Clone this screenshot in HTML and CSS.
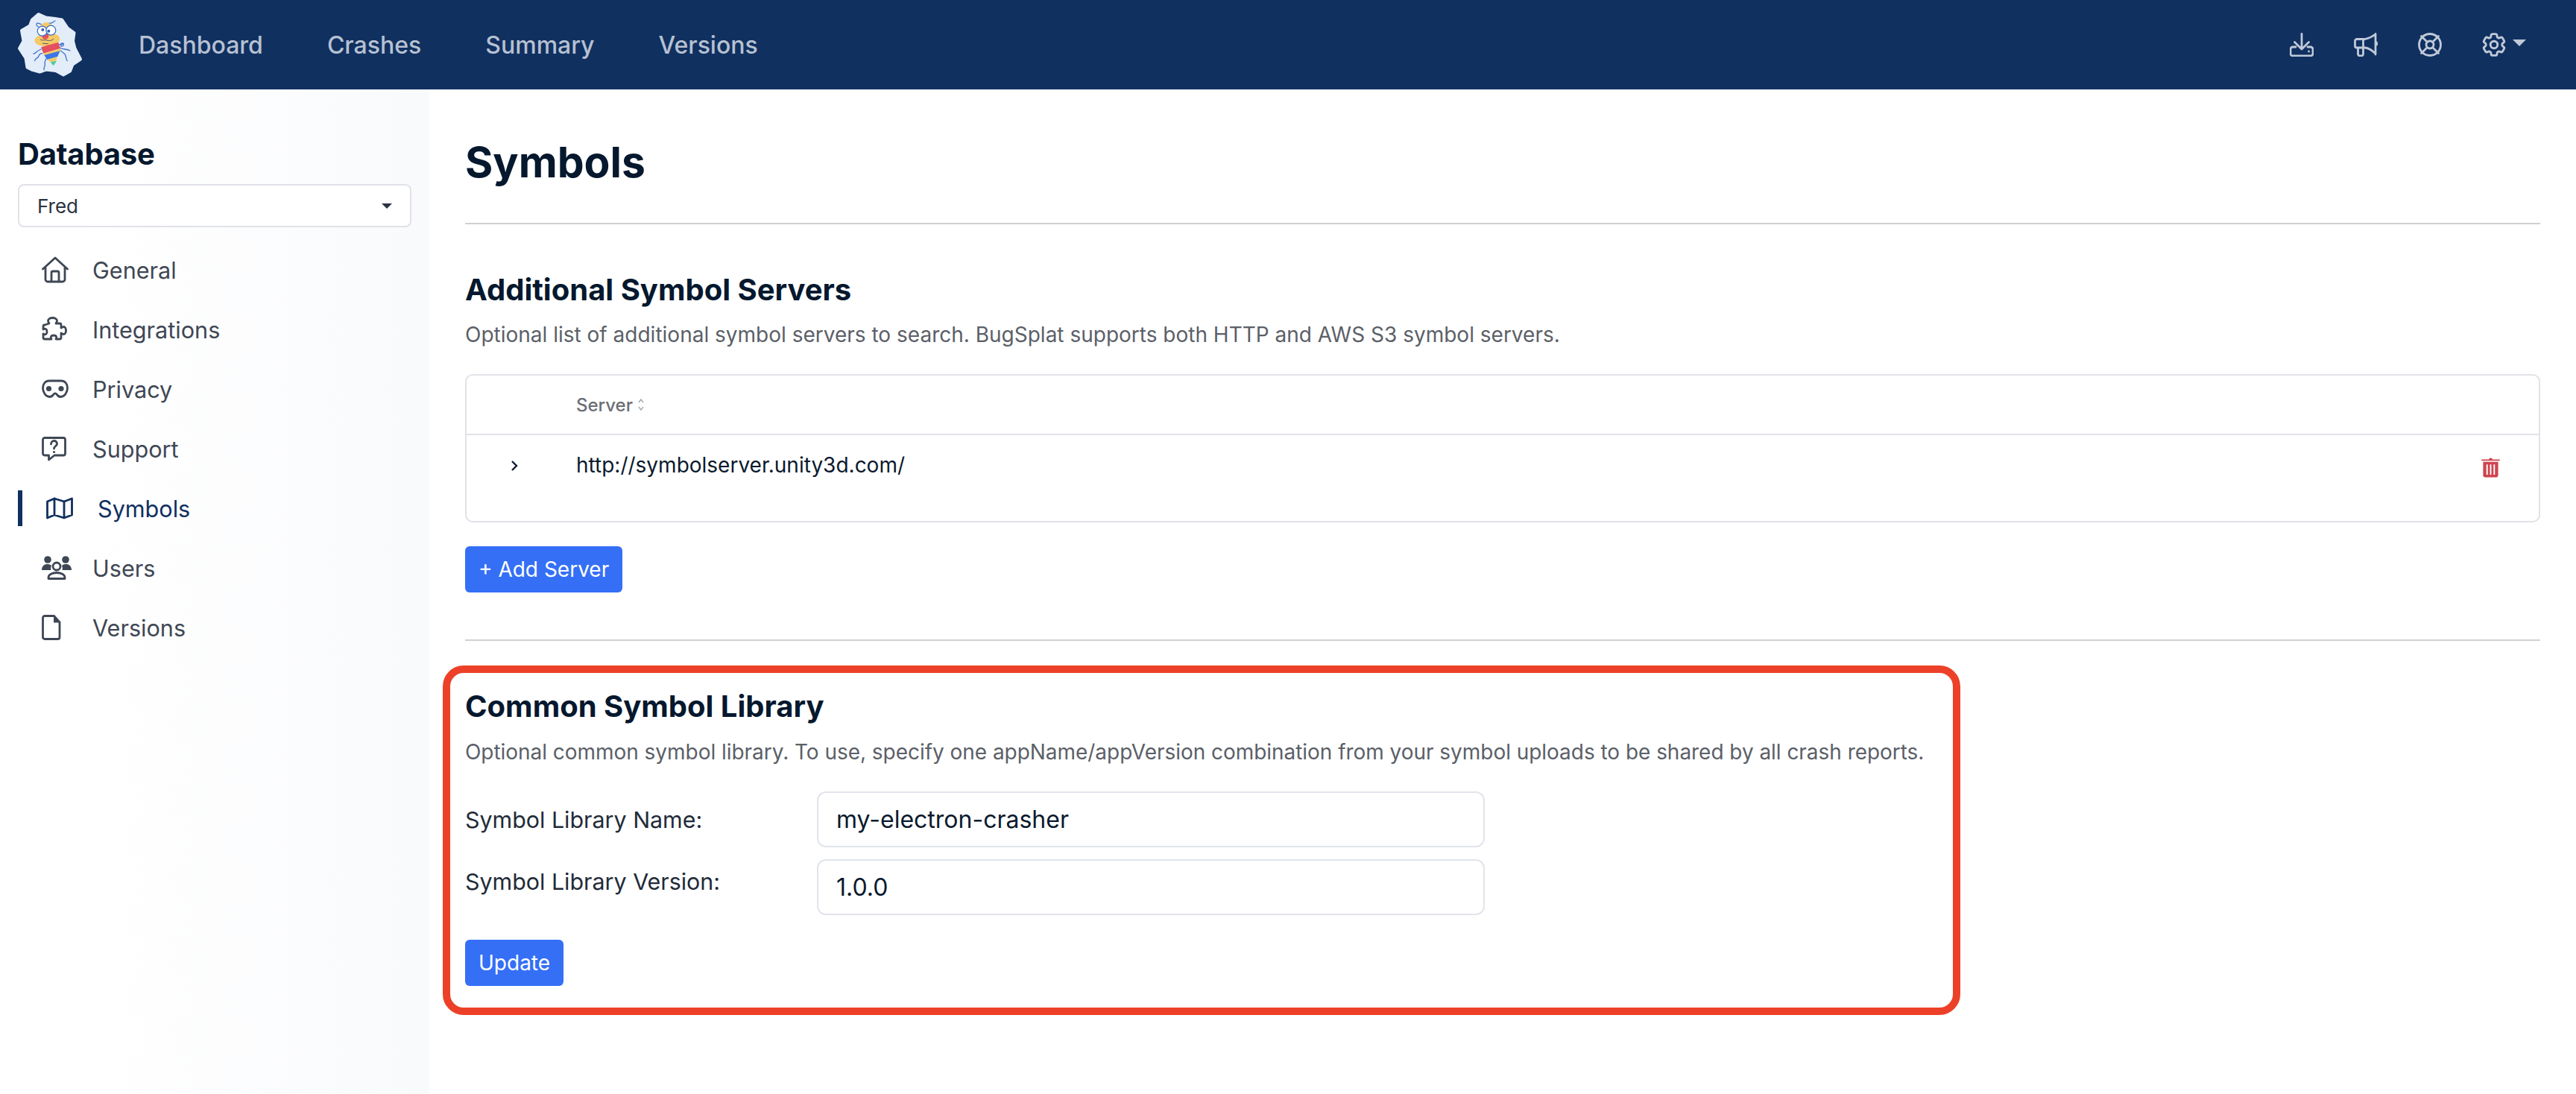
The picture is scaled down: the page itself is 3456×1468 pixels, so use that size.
FILE: index.html
```html
<!DOCTYPE html>
<html lang="en">
<head>
<meta charset="utf-8">
<title>Symbols</title>
<link rel="stylesheet" href="styles.css">
</head>
<body>
<header class="topbar">
  <a class="logo" href="#">
    <svg width="90" height="90" viewBox="0 0 90 90">
      <polygon class="blob" points="30.700,4 40.700,8.500 53,10 62,11.500 69.500,22.500 78.500,29 77,40 79.500,50 87,64.500 76.500,71.500 73,80.500 64,85.500 54,80 40.700,78.500 32.300,81.500 21.500,78.500 15.500,75.500 13.500,63 5,50 10.500,40 8,26 19,19.500 22,11.500"/>
      <g fill="none" stroke="#3a70c9" stroke-width="1.300" stroke-linecap="round">
        <path d="M37 20c-3-3-9-6-9-2 0 3 4 4 6 3"/>
        <path d="M42 17c3-2 4 0 6-1s3-2 5-3"/>
        <path d="M24 57c3 0 3-3 10-6"/>
        <path d="M25.700 66.700c0-4 4-3 5-6s2-4 5-4"/>
        <path d="M38.300 79c-2-3 2-5 1-8s1-5 1.500-7"/>
        <path d="M58 45c3-1 3-2 5-2 2 0 2 4-1 4s-1-3 1-3"/>
        <path d="M59 49c4 3 9 1 14 4"/>
        <path d="M60.700 53c2 3 5 3 6 6s1 6 2.500 7.500"/>
      </g>
      <ellipse cx="41" cy="24" rx="9" ry="9" fill="#f5c964"/>
      <ellipse cx="42.300" cy="38.300" rx="17" ry="8.500" transform="rotate(-6 42.300 38.300)" fill="#f5c964"/>
      <polygon points="34,48.300 57.300,41.700 60,50 37.300,56.700" fill="#e5505f"/>
      <polygon points="37.300,56.700 60,50 60,55 38.300,59.500" fill="#f5c964"/>
      <polygon points="38.300,59 59.500,53.300 56.300,61 42.300,65" fill="#3b77e6"/>
      <polygon points="42.300,65 56.300,61 54,66.700 46.700,68.300" fill="#f5c964"/>
      <polygon points="46.700,68.300 55,66.700 50.700,73.300" fill="#4ac99a"/>
      <path d="M33 38c3 2 6 0 9 1s6 1 9-2M36 43c3 1 5 0 8 1" fill="none" stroke="#4a5a75" stroke-width="1"/>
      <circle cx="39.700" cy="33.300" r="4.500" fill="#e5505f"/>
      <circle cx="35.700" cy="26.700" r="6.500" fill="#fff" stroke="#3a70c9" stroke-width="1.300"/>
      <circle cx="47.300" cy="25.700" r="6.500" fill="#fff" stroke="#3a70c9" stroke-width="1.300"/>
      <circle cx="36.300" cy="25" r="2" fill="#2f62b8"/>
      <circle cx="44.300" cy="26.700" r="2" fill="#2f62b8"/>
    </svg>
  </a>
  <nav class="topnav">
    <a href="#">Dashboard</a>
    <a href="#">Crashes</a>
    <a href="#">Summary</a>
    <a href="#">Versions</a>
  </nav>
  <div class="topicons">
    <svg class="ti" viewBox="0 0 32 32"><path d="M16 1.500V22M6.500 12.500 16 22l9.500-9.500M8 19H4a3 3 0 0 0-3 3v6a3 3 0 0 0 3 3h24a3 3 0 0 0 3-3v-6a3 3 0 0 0-3-3h-4"/><circle class="dot" cx="25.500" cy="25" r="1.400"/></svg>
    <svg class="ti" viewBox="0 0 32 32"><path d="M29 1.500v27.500M29 2c-4 3-9 5.500-14 6.500H4A2.500 2.500 0 0 0 1.500 11v6.500A2.500 2.500 0 0 0 4 20h11c5 .5 10 4 14 8M12.500 8.500v20A2.500 2.500 0 0 1 10 31H8a2.500 2.500 0 0 1-2.500-2.500V20M29.500 12.500c2 .5 2 3.500 0 4"/></svg>
    <svg class="ti" viewBox="0 0 32 32"><circle cx="16" cy="16" r="14.500"/><circle cx="16" cy="16" r="5"/><path d="m4.500 4.500 8 8M27.500 4.500l-8 8M4.500 27.500l8-8M27.500 27.500l-8-8"/></svg>
    <span class="gear">
      <svg class="ti cog" viewBox="2 2 20 20"><path d="M9.594 3.94c.09-.542.56-.94 1.11-.94h2.593c.55 0 1.02.398 1.11.94l.213 1.281c.063.374.313.686.645.87.074.04.147.083.22.127.325.196.72.257 1.075.124l1.217-.456a1.125 1.125 0 0 1 1.37.49l1.296 2.247a1.125 1.125 0 0 1-.26 1.431l-1.003.827c-.293.241-.438.613-.43.992a7.723 7.723 0 0 1 0 .255c-.008.378.137.75.43.991l1.004.827c.424.35.534.955.26 1.43l-1.298 2.247a1.125 1.125 0 0 1-1.369.491l-1.217-.456c-.355-.133-.75-.072-1.076.124a6.47 6.47 0 0 1-.22.128c-.331.183-.581.495-.644.869l-.213 1.281c-.09.543-.56.94-1.11.94h-2.594c-.55 0-1.019-.398-1.11-.94l-.213-1.281c-.062-.374-.312-.686-.644-.87a6.52 6.52 0 0 1-.22-.127c-.325-.196-.72-.257-1.076-.124l-1.217.456a1.125 1.125 0 0 1-1.369-.49l-1.297-2.247a1.125 1.125 0 0 1 .26-1.431l1.004-.827c.292-.24.437-.613.43-.991a6.932 6.932 0 0 1 0-.255c.007-.38-.138-.751-.43-.992l-1.004-.827a1.125 1.125 0 0 1-.26-1.43l1.297-2.247a1.125 1.125 0 0 1 1.37-.491l1.216.456c.356.133.751.072 1.076-.124.072-.044.146-.086.22-.128.332-.183.582-.495.644-.869l.214-1.28Z"/><path d="M15 12a3 3 0 1 1-6 0 3 3 0 0 1 6 0Z"/></svg>
      <i class="caret-light"></i>
    </span>
  </div>
</header>
<div class="layout">
  <aside class="sidebar">
    <h2 class="side-title">Database</h2>
    <div class="db-select"><span>Fred</span><i class="caret-dark"></i></div>
    <ul class="side-nav">
      <li><svg class="si" viewBox="0 0 36 36"><path d="M1.500 17 18 2l16.500 15M5 14v17a3 3 0 0 0 3 3h20a3 3 0 0 0 3-3V14M13 34V22a2 2 0 0 1 2-2h6a2 2 0 0 1 2 2v12"/></svg><span>General</span></li>
      <li><svg class="si" viewBox="0 0 36 36"><path d="M10 10c-1-1.500-1.500-2.500-1.500-3.500a6 4 0 0 1 12 0c0 1-.5 2-1.500 3.500h5a2 2 0 0 1 2 2v4c1.500-1 2.500-1.500 3.500-1.500a3 5 0 0 1 0 10c-1 0-2-.5-3.500-1.500v6a2 2 0 0 1-2 2h-5c1-1.500 1-2.500.5-3.500-1-2-6-2-7 0-.5 1-.5 2 .5 3.500H4a2 2 0 0 1-2-2v-5c1.500 1 2.500 1 3.500.5 2-1 2-6 0-7-1-.5-2-.5-3.500.5v-4a2 2 0 0 1 2-2z"/></svg><span>Integrations</span></li>
      <li><svg class="si" viewBox="0 0 36 36"><path d="M10 7h16c5 0 8.500 4 8.500 9.500 0 6-4 12-9 12-3 0-4-1-5.500-3.500-1-1.500-3-1.500-4 0-1.500 2.500-2.500 3.500-5.500 3.500-5 0-9-6-9-12C1.500 11 5 7 10 7z"/><circle class="dotd" cx="9.500" cy="17.500" r="3.600"/><circle class="dotd" cx="26" cy="17.500" r="3.600"/></svg><span>Privacy</span></li>
      <li><svg class="si" viewBox="0 0 36 36"><path d="M4 3.500h25a2.500 2.500 0 0 1 2.500 2.500v18.500a2.500 2.500 0 0 1-2.500 2.500H17l-7.500 6v-6H4a2.500 2.500 0 0 1-2.500-2.500V6A2.500 2.500 0 0 1 4 3.500z"/><path d="M12.500 12c0-3 2-4.500 4-4.500s4 1.500 4 4c0 3-4 3-4 6.500"/><circle class="dotd" cx="16.500" cy="22.500" r="1.600"/></svg><span>Support</span></li>
      <li class="active"><svg class="si" viewBox="0 0 36 36"><path d="M1.500 9 11 5l13 4 10.500-4v22L24 31l-13-4-9.500 4zM11 5v22M24 9v22"/></svg><span>Symbols</span></li>
      <li><svg class="si wide" viewBox="0 0 40 32"><circle class="dotd" cx="8" cy="5" r="4.800"/><circle class="dotd" cx="32" cy="5" r="4.800"/><path class="dotd" d="M0 19c0-6 4-8 8-8 3 0 4 1 5 2-1 2-1 4-.5 6zM40 19c0-6-4-8-8-8-3 0-4 1-5 2 1 2 1 4 .5 6z"/><circle cx="20" cy="14" r="5"/><path d="M9 30.500V29c0-4 5-6.500 11-6.500S31 25 31 29v1.500z"/></svg><span>Users</span></li>
      <li><svg class="si" viewBox="0 0 36 36"><path d="M4 2.500h12.500L24 11v20a2.500 2.500 0 0 1-2.500 2.500H4A2.500 2.500 0 0 1 1.500 31V5A2.500 2.500 0 0 1 4 2.500z"/><path class="dotd" d="M16 2.500 24.500 11.500H16z"/></svg><span>Versions</span></li>
    </ul>
  </aside>
  <main class="main">
    <h1 class="page-title">Symbols</h1>
    <section class="block first">
      <h3 class="block-title">Additional Symbol Servers</h3>
      <p class="block-desc">Optional list of additional symbol servers to search. BugSplat supports both HTTP and AWS S3 symbol servers.</p>
      <div class="table">
        <div class="thead">
          <span class="th">Server</span>
          <svg class="sort" viewBox="0 0 10 20"><path d="M2 7l3-4 3 4M2 13l3 4 3-4"/></svg>
        </div>
        <div class="trow">
          <svg class="chev" viewBox="0 0 10 16"><path d="M2 2l6 6-6 6"/></svg>
          <span class="td">http://symbolserver.unity3d.com/</span>
          <svg class="trash" viewBox="0 0 26 30"><path d="M1 4.500h9.500C11 3 12 2.500 13 2.500s2 .5 2.500 2H25a1 1 0 0 1 0 2H1a1 1 0 0 1 0-2zM2.500 8h21v18.500A3 3 0 0 1 20.500 29.500h-15a3 3 0 0 1-3-3zM7 11.500V26h2V11.500zM12 11.500V26h2V11.500zM17 11.500V26h2V11.500z" fill-rule="evenodd"/></svg>
        </div>
      </div>
      <a class="btn add" href="#">+ Add Server</a>
    </section>
    <section class="block second">
      <h3 class="block-title">Common Symbol Library</h3>
      <p class="block-desc">Optional common symbol library. To use, specify one appName/appVersion combination from your symbol uploads to be shared by all crash reports.</p>
      <div class="field one"><label>Symbol Library Name:</label><input type="text" value="my-electron-crasher"></div>
      <div class="field two"><label>Symbol Library Version:</label><input type="text" value="1.0.0"></div>
      <a class="btn update" href="#">Update</a>
      <div class="highlight"></div>
    </section>
  </main>
</div>
</body>
</html>
```
FILE: styles.css
```css
* { box-sizing: border-box; }
html, body { margin: 0; height: 100%; }
body {
  font-family: Inter, "Liberation Sans", sans-serif;
  background: #fff;
  color: #0b1a2e;
  overflow: hidden;
}
a { text-decoration: none; color: inherit; }

.topbar {
  height: 120px;
  background: #103060;
  display: flex;
  align-items: center;
  padding-left: 21px;
}
.logo { display: flex; width: 165px; }
.blob { fill: #e3edf9; stroke: #e3edf9; stroke-width: 4; stroke-linejoin: round; }
.topnav { display: flex; gap: 86px; font-size: 32px; font-weight: 500; color: #b7c1d2; }
.topicons { margin-left: auto; display: flex; align-items: center; gap: 54px; padding-right: 67px; }
.ti { width: 32px; height: 32px; fill: none; stroke: #c0c9d8; stroke-width: 2.8; stroke-linecap: round; stroke-linejoin: round; display: block; }
.ti.cog { stroke-width: 1.8; }
.ti .dot { fill: #c0c9d8; stroke: none; }
.gear { display: flex; align-items: flex-start; gap: 9px; }
.caret-light { width: 0; height: 0; border-left: 9px solid transparent; border-right: 9px solid transparent; border-top: 9px solid #c0c9d8; margin-top: 9px; }

.layout { display: flex; height: 1348px; }
.sidebar {
  width: 576px;
  flex: none;
  background: linear-gradient(to right, #fff 20%, #f9fafc 100%);
  padding: 65px 24px 0;
}
.side-title { margin: 0; font-size: 40px; line-height: 44px; font-weight: 700; color: #05182e; letter-spacing: -0.2px; }
.db-select {
  margin-top: 18px;
  height: 58px;
  width: 528px;
  background: #fff;
  border: 2px solid #e1e2e8;
  border-radius: 8px;
  display: flex;
  align-items: center;
  justify-content: space-between;
  padding: 0 24px;
  font-size: 26px;
  color: #2a3340;
}
.caret-dark { width: 0; height: 0; border-left: 7px solid transparent; border-right: 7px solid transparent; border-top: 7px solid #2a3340; }
.side-nav { list-style: none; margin: 17px 0 0; padding: 0; }
.side-nav li {
  height: 80px;
  display: flex;
  align-items: center;
  padding-left: 32px;
  gap: 32px;
  font-size: 30.6px;
  color: #3f4754;
}
.si { width: 36px; height: 36px; fill: none; stroke: currentColor; stroke-width: 2.8; stroke-linecap: round; stroke-linejoin: round; flex: none; }
.si.wide { width: 40px; height: 32px; margin-right: -4px; }
.si .dotd { fill: currentColor; stroke: none; }
.side-nav li.active {
  color: #10305f;
  padding-left: 38px;
  gap: 33px;
  position: relative;
}
.side-nav li.active::before {
  content: "";
  position: absolute;
  left: 0;
  top: 16px;
  width: 6px;
  height: 48px;
  background: #10305f;
}

.main { flex: 1; padding: 0 48px; min-width: 0; }
.page-title { margin: 0; padding-top: 65px; height: 181px; border-bottom: 2px solid #cfd0d3; font-size: 57px; line-height: 66px; font-weight: 700; color: #05182e; }
.block-title { margin: 0; font-size: 40px; line-height: 46px; font-weight: 700; color: #05182e; }
.block-desc { margin: 17px 0 0; font-size: 28px; line-height: 40px; color: #5b6068; }
.block.first { padding-top: 65px; height: 559px; border-bottom: 2px solid #cfd0d3; }
.table { margin-top: 33px; height: 199px; border: 2px solid #e1e2e8; border-radius: 10px; }
.thead { height: 80px; border-bottom: 2px solid #e1e2e8; display: flex; align-items: center; padding-left: 147px; gap: 6px; }
.th { font-size: 24px; font-weight: 500; color: #6a6e75; }
.sort { width: 10px; height: 20px; fill: none; stroke: #a9adb3; stroke-width: 1.6; }
.trow { height: 115px; display: flex; align-items: flex-start; padding-top: 21px; position: relative; }
.chev { width: 10px; height: 16px; margin: 12px 0 0 59px; fill: none; stroke: #0b1a2e; stroke-width: 2.4; }
.td { margin-left: 78px; font-size: 28px; line-height: 38px; color: #0b1a2e; flex: 1; }
.trash { width: 25px; height: 29px; margin: 7px 52px 0 0; fill: #cf4450; flex: none; }
.btn {
  display: inline-flex;
  align-items: center;
  height: 62px;
  padding: 0 18px;
  background: #346ff6;
  color: #fff;
  font-size: 28px;
  border-radius: 6px;
}
.add { margin-top: 32px; }

.block.second { padding-top: 65px; position: relative; }
.block.second .block-desc { margin-top: 18px; letter-spacing: -0.04px; }
.field { display: flex; align-items: center; }
.field label { width: 472px; flex: none; font-size: 30.4px; color: #222b38; }
.field input {
  width: 896px;
  height: 75px;
  padding: 0 24px;
  border: 2px solid #e1e4ea;
  border-radius: 12px;
  font: 32px Inter, "Liberation Sans", sans-serif;
  color: #0b1a2e;
  background: #fff;
}
.field.one { margin-top: 33px; }
.field.two { margin-top: 16px; }
.field.two label { position: relative; top: -8px; }
.update { margin-top: 33px; }
.highlight {
  position: absolute;
  left: -30px;
  top: 33px;
  width: 2036px;
  height: 469px;
  border: 10px solid #ec4128;
  border-radius: 28px;
  pointer-events: none;
}
```
